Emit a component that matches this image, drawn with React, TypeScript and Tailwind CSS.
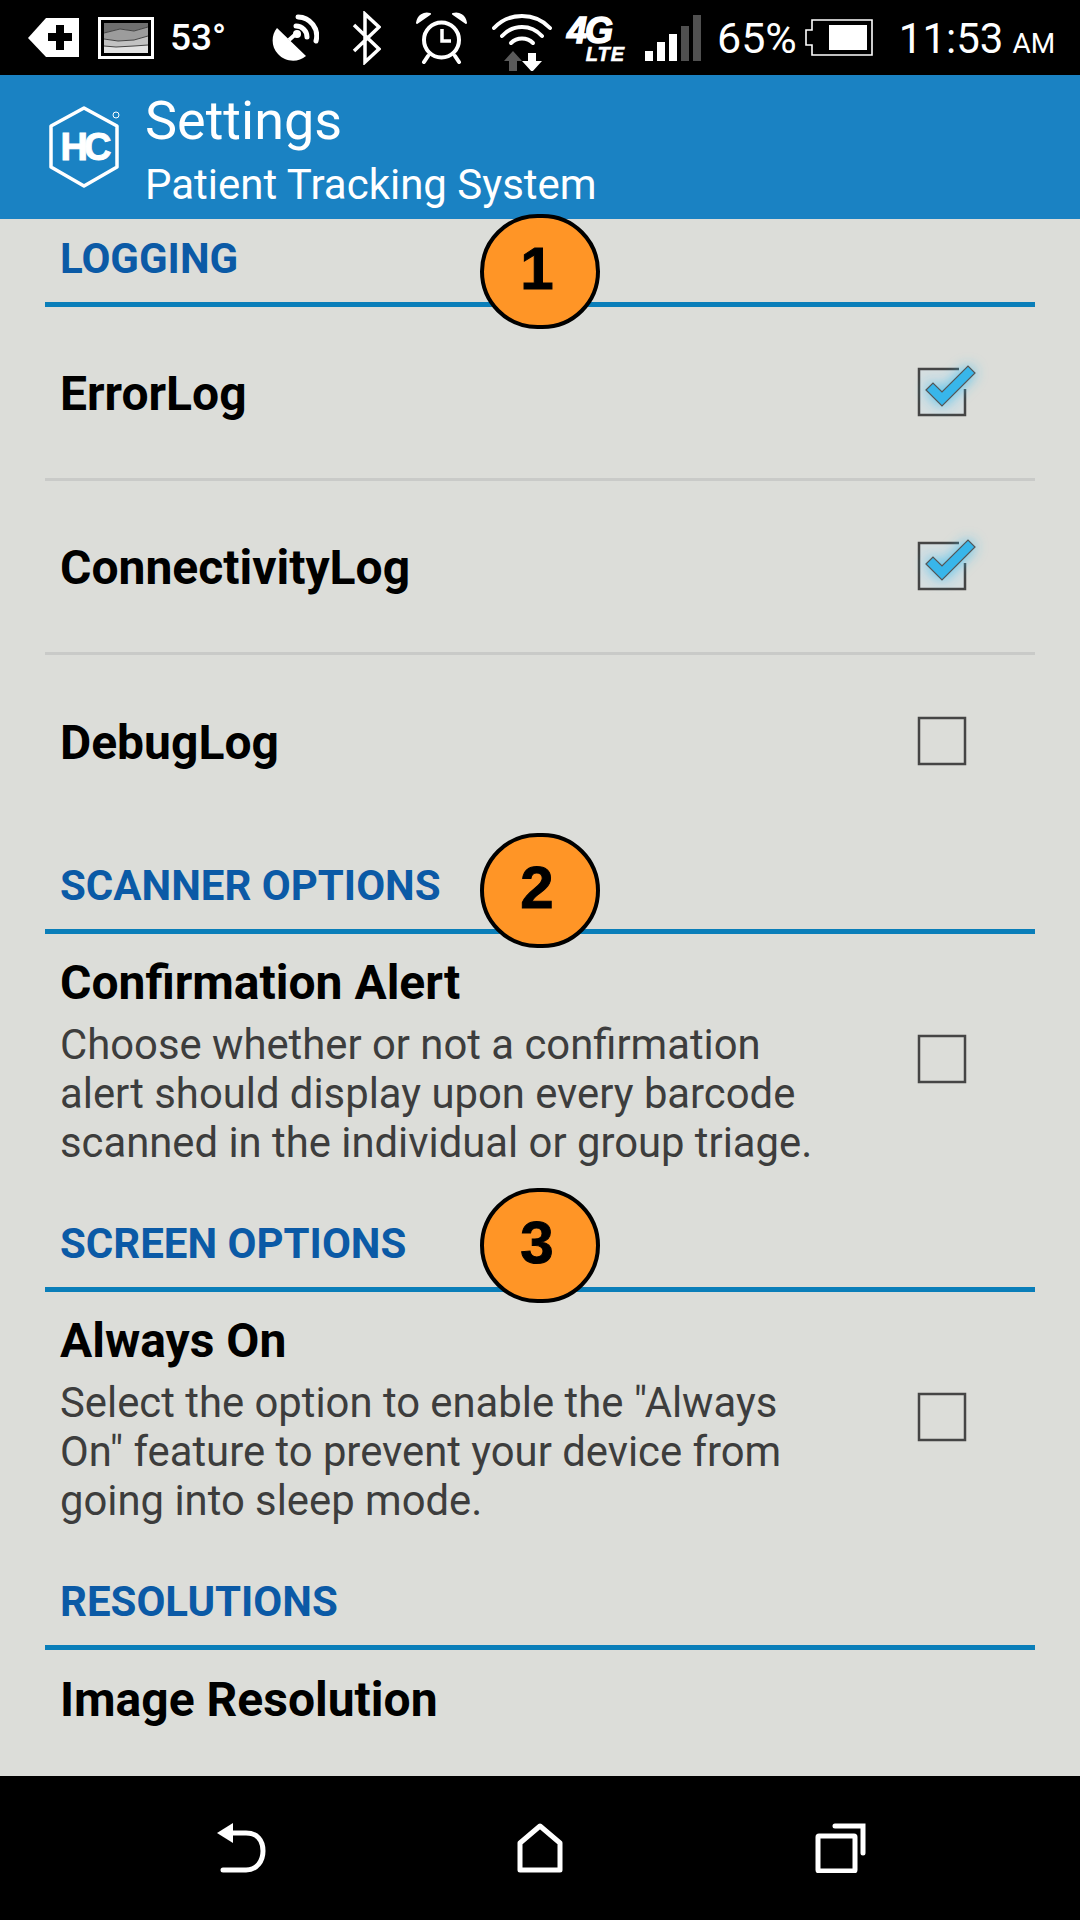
import type { ReactNode } from "react";

function AddTag() {
  return (
    <svg width="51" height="40" viewBox="0 0 51 40" className="ml-[28px] shrink-0">
      <path d="M0 20 L18 0 H51 V39 H18 Z" fill="#fff" />
      <path d="M28 7 h8 v8 h8 v8 h-8 v9 h-8 v-9 h-8 v-8 h8 Z" fill="#000" />
    </svg>
  );
}

function WeatherTile() {
  return (
    <svg width="56" height="42" viewBox="0 0 56 42" className="ml-[19px] shrink-0">
      <rect x="1.5" y="1.5" width="53" height="39" fill="#000" stroke="#fff" strokeWidth="3" />
      <rect x="6" y="6" width="44" height="30" fill="#e2e2e2" />
      <path d="M6 6 H50 V10 L36 14 L22 12 L6 16 Z" fill="#6f6f6f" />
      <path d="M6 16 L22 12 L36 14 L50 10 V19 L36 23 L20 24 L6 22 Z" fill="#9c9c9c" />
      <path d="M6 22 L20 24 L36 23 L50 19 V28 L36 29 L18 30 L6 29 Z" fill="#c2c2c2" />
      <path d="M6 16 L22 12 L36 14 L50 10 M6 22 L20 24 L36 23 L50 19 M6 29 L18 30 L36 29 L50 28" fill="none" stroke="#444" strokeWidth="1" />
    </svg>
  );
}

function Satellite() {
  return (
    <svg width="47" height="48" viewBox="0 0 47 48" className="ml-[42px] shrink-0">
      <path d="M5 14 L34 42 C26 49 13 48 6 40 C-1 33 -1 21 5 14 Z" fill="#fff" />
      <path d="M17 26 L26 18" stroke="#fff" strokeWidth="4" />
      <path d="M24 12 A11 11 0 0 1 35 23 M26 3 A19 19 0 0 1 44 27" fill="none" stroke="#fff" strokeWidth="5" strokeLinecap="round" />
      <circle cx="25" cy="20" r="4" fill="#fff" />
    </svg>
  );
}

function Bluetooth() {
  return (
    <svg width="29" height="54" viewBox="0 0 29 54" className="ml-[33px] shrink-0">
      <path d="M2 14 L27 38 L13 51 V3 L27 16 L2 40" fill="none" stroke="#fff" strokeWidth="3.5" strokeLinejoin="miter" />
    </svg>
  );
}

function Alarm() {
  return (
    <svg width="51" height="52" viewBox="0 0 51 52" className="ml-[35px] shrink-0">
      <circle cx="25.5" cy="28" r="17.5" fill="none" stroke="#fff" strokeWidth="4" />
      <path d="M26 17 V29 H35" fill="none" stroke="#fff" strokeWidth="3.5" />
      <path d="M1 11 C2 4 8 0 14 2 Z M50 11 C49 4 43 0 37 2 Z" fill="#fff" stroke="#fff" strokeWidth="2" strokeLinejoin="round" />
      <path d="M12 44 L8 50 M39 44 L43 50" stroke="#fff" strokeWidth="4" strokeLinecap="round" />
    </svg>
  );
}

function Wifi() {
  return (
    <svg width="60" height="62" viewBox="0 0 60 62" className="ml-[25px] shrink-0 mt-[4px]">
      <path d="M2 19 C17 3 43 3 58 19" fill="none" stroke="#fff" strokeWidth="4" strokeLinecap="round" />
      <path d="M10 27 C21 15 39 15 50 27" fill="none" stroke="#fff" strokeWidth="4" strokeLinecap="round" />
      <path d="M19 34 C25 28 35 28 41 34" fill="none" stroke="#fff" strokeWidth="4" strokeLinecap="round" />
      <path d="M12 52 L21 42 L30 52 H25 V62 H17 V52 Z" fill="#5a5a5a" />
      <path d="M36 44 H44 V52 H50 L40 63 L30 52 H36 Z" fill="#fff" />
    </svg>
  );
}

function NetworkType() {
  return (
    <div className="ml-[15px] w-[58px] h-[46px] mt-[4px] shrink-0 relative italic text-white font-black font-['Liberation_Sans',sans-serif]">
      <span className="absolute left-0 top-0 text-[36px] leading-[28px] tracking-[-2px] [-webkit-text-stroke:1.5px_#fff]">4G</span>
      <span className="absolute right-0 bottom-0 text-[20px] leading-[18px] tracking-[1px] [-webkit-text-stroke:0.6px_#fff]">LTE</span>
    </div>
  );
}

function Signal() {
  return (
    <div className="ml-[20px] h-[46px] flex items-end gap-[4px] shrink-0">
      <div className="w-[8px] h-[10px] bg-white" />
      <div className="w-[8px] h-[19px] bg-white" />
      <div className="w-[8px] h-[27px] bg-white" />
      <div className="w-[8px] h-[35px] bg-[#505050]" />
      <div className="w-[8px] h-[46px] bg-[#505050]" />
    </div>
  );
}

function Battery() {
  return (
    <svg width="68" height="37" viewBox="0 0 68 37" className="ml-[8px] shrink-0">
      <path d="M7 1 H67 V36 H7 V26 H1 V11 H7 Z" fill="none" stroke="#fff" strokeWidth="1.6" />
      <rect x="24" y="6" width="38" height="25" fill="#fff" />
    </svg>
  );
}

function StatusBar() {
  return (
    <div className="h-[75px] bg-black flex items-center text-white font-['Roboto',sans-serif]">
      <AddTag />
      <WeatherTile />
      <span className="ml-[16px] w-[60px] text-[37px] font-medium leading-none">53°</span>
      <Satellite />
      <Bluetooth />
      <Alarm />
      <Wifi />
      <NetworkType />
      <Signal />
      <span className="ml-[16px] text-[43px] leading-none mt-[2px]">65%</span>
      <Battery />
      <span className="ml-[26px] text-[42px] leading-none mt-[2px]">11:53</span>
      <span className="ml-[9px] text-[28px] leading-none mt-[12px]">AM</span>
    </div>
  );
}

function Logo() {
  return (
    <svg width="76" height="84" viewBox="0 0 76 84" className="shrink-0">
      <path d="M36 3 L69 21 V62 L36 81 L3 62 V21 Z" fill="none" stroke="#fff" strokeWidth="3.5" strokeLinejoin="round" />
      <text x="36" y="55" textAnchor="middle" fill="#fff" fontFamily="'Liberation Sans',sans-serif" fontWeight="700" fontSize="38" letterSpacing="-4" stroke="#fff" strokeWidth="1">HC</text>
      <circle cx="68" cy="10" r="3" fill="none" stroke="#fff" strokeWidth="1" />
    </svg>
  );
}

function AppBar() {
  return (
    <div className="h-[144px] bg-[#1a82c3] flex items-center pl-[48px] text-white font-['Roboto',sans-serif]">
      <Logo />
      <div className="ml-[21px] flex flex-col mt-[6px]">
        <span className="text-[54px] leading-[60px]">Settings</span>
        <span className="text-[42px] leading-[48px] mt-[10px]">Patient Tracking System</span>
      </div>
    </div>
  );
}

function Badge({ n, top }: { n: number; top: string }) {
  return (
    <div className={`absolute left-[435px] ${top} w-[120px] h-[115px] rounded-full bg-[#ff9526] border-[4px] border-black flex items-center justify-center text-black text-[60px] font-bold font-['Liberation_Sans',sans-serif] [-webkit-text-stroke:1px_#000]`}>
      <span className="-ml-[6px] -mt-[5px]">{n}</span>
    </div>
  );
}

function SectionHeader({ title, children }: { title: string; children?: ReactNode }) {
  return (
    <div className="relative h-[88px] mx-[45px] border-b-[5px] border-[#0a7eb9]">
      <div className="pl-[15px] pt-[15px] text-[42px] leading-[50px] font-bold text-[#0b5aa6]">{title}</div>
      {children}
    </div>
  );
}

function Checkbox({ checked }: { checked?: boolean }) {
  return (
    <svg width="120" height="100" viewBox="0 0 120 100" className="shrink-0 mr-[35px] -mt-[3px]">
      <defs>
        <filter id="glow" x="-60%" y="-60%" width="220%" height="220%">
          <feGaussianBlur stdDeviation="7" />
        </filter>
      </defs>
      {checked ? (
        <>
          <rect x="39" y="27" width="46" height="46" fill="#d6dee0" />
          <path d="M85 48 V74 H39 V28 H79" fill="none" stroke="#454545" strokeWidth="2.5" />
          <polygon points="46,49 53,42 62,51 88,25 95,32 62,65" fill="#38bdf0" filter="url(#glow)" />
          <polygon points="46,49 53,42 62,51 88,25 95,32 62,65" fill="#38b6ea" stroke="#555" strokeWidth="1.2" />
        </>
      ) : (
        <rect x="39" y="27" width="46" height="46" fill="none" stroke="#454545" strokeWidth="2.5" />
      )}
    </svg>
  );
}

function SimpleRow({ title, checked, divider }: { title: string; checked?: boolean; divider?: boolean }) {
  return (
    <div className={`mx-[45px] h-[174px] flex items-center justify-between ${divider ? "border-b-[3px] border-[#c9cac8]" : ""}`}>
      <span className="pl-[15px] text-[48px] font-bold text-black leading-[56px] mt-[2px]">{title}</span>
      <Checkbox checked={checked} />
    </div>
  );
}

function DetailRow({ title, children }: { title: string; children: ReactNode }) {
  return (
    <div className="mx-[45px] pt-[21px] pb-[38px] flex items-center justify-between">
      <div className="pl-[15px] w-[790px]">
        <div className="text-[48px] font-bold text-black leading-[56px]">{title}</div>
        <div className="mt-[9px] text-[41.8px] leading-[49px] text-[#3d3d3d] -mb-[1px]">{children}</div>
      </div>
      <Checkbox />
    </div>
  );
}

function NavBar() {
  return (
    <div className="h-[144px] bg-black flex items-start pt-[47px]">
      <svg width="52" height="50" viewBox="0 0 52 50" className="ml-[216px] shrink-0">
        <path d="M7 47 H30 C41 47 47 38 47 28 C47 17 41 10 30 10 H14" fill="none" stroke="#fff" strokeWidth="5" strokeLinecap="round" />
        <path d="M1 10 L17 0 V20 Z" fill="#fff" />
      </svg>
      <svg width="46" height="50" viewBox="0 0 46 50" className="ml-[249px] shrink-0">
        <path d="M3 47 V20 L23 3 L43 20 V47 Z" fill="none" stroke="#fff" strokeWidth="5" strokeLinejoin="round" />
      </svg>
      <svg width="54" height="50" viewBox="0 0 54 50" className="ml-[252px] shrink-0">
        <rect x="3" y="13" width="37" height="35" rx="1" fill="none" stroke="#fff" strokeWidth="5" />
        <path d="M20 3 H48 V30" fill="none" stroke="#fff" strokeWidth="5" strokeLinecap="round" />
      </svg>
    </div>
  );
}

export default function App() {
  return (
    <div className="w-[1080px] h-[1920px] flex flex-col bg-[#dcddd9] overflow-hidden font-['Roboto',sans-serif]">
      <StatusBar />
      <AppBar />
      <div className="flex-1">
        <SectionHeader title="LOGGING">
          <Badge n={1} top="top-[-5px]" />
        </SectionHeader>
        <SimpleRow title="ErrorLog" checked divider />
        <SimpleRow title="ConnectivityLog" checked divider />
        <SimpleRow title="DebugLog" />
        <div className="h-[17px]" />
        <SectionHeader title="SCANNER OPTIONS">
          <Badge n={2} top="top-[-13px]" />
        </SectionHeader>
        <DetailRow title="Confirmation Alert">
          Choose whether or not a confirmation alert should display upon every barcode scanned in the individual or group triage.
        </DetailRow>
        <SectionHeader title="SCREEN OPTIONS">
          <Badge n={3} top="top-[-16px]" />
        </SectionHeader>
        <DetailRow title="Always On">
          Select the option to enable the "Always On" feature to prevent your device from going into sleep mode.
        </DetailRow>
        <SectionHeader title="RESOLUTIONS" />
        <div className="mx-[45px] pt-[22px] pl-[15px] text-[48px] font-bold text-black leading-[56px]">Image Resolution</div>
      </div>
      <NavBar />
    </div>
  );
}
